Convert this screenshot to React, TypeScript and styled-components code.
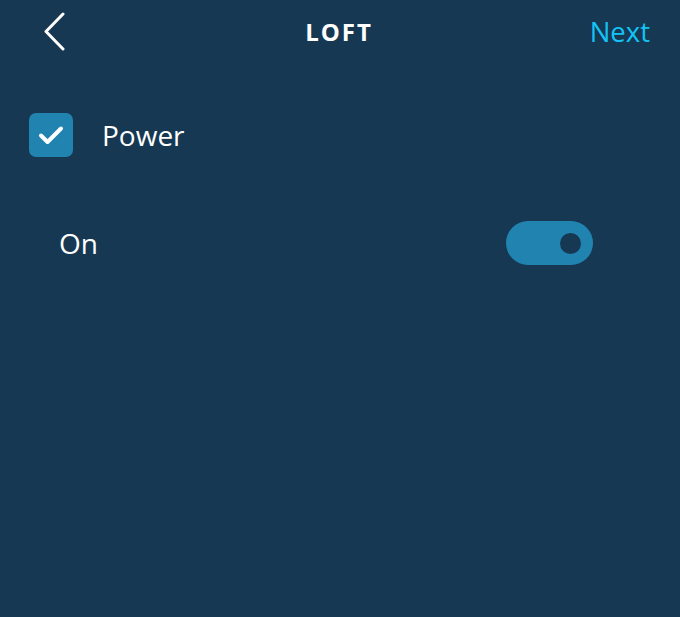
import React, { useState } from "react";
import styled, { createGlobalStyle } from "styled-components";

const GlobalStyle = createGlobalStyle`
  html, body {
    margin: 0;
    padding: 0;
    background: #163852;
  }
`;

const Page = styled.div`
  width: 680px;
  height: 617px;
  background: #163852;
  color: #ffffff;
  font-family: "Open Sans", "Liberation Sans", sans-serif;
  overflow: hidden;
`;

const Header = styled.div`
  height: 62px;
  display: grid;
  grid-template-columns: 1fr auto 1fr;
  align-items: center;
  padding: 0 30px;
`;

const BackBtn = styled.button`
  justify-self: start;
  background: none;
  border: none;
  padding: 0;
  margin-left: 12px;
  width: 26px;
  height: 40px;
  cursor: pointer;
  display: flex;
  align-items: center;
`;

const Title = styled.div`
  font-size: 24px;
  font-weight: 700;
  letter-spacing: 2px;
  margin-right: -2px;
  margin-left: -4px;
`;

const NextBtn = styled.div`
  justify-self: end;
  color: #14c3f5;
  font-size: 27.5px;
  cursor: pointer;
`;

const PowerRow = styled.label`
  display: flex;
  align-items: center;
  gap: 29px;
  margin: 51px 0 0 29px;
  font-size: 28px;
  font-weight: 500;
  cursor: pointer;
`;

const CheckBox = styled.div<{ checked: boolean }>`
  width: 44px;
  height: 44px;
  border-radius: 7px;
  background: ${(p) => (p.checked ? "#2183b0" : "transparent")};
  border: ${(p) => (p.checked ? "none" : "2px solid #2183b0")};
  box-sizing: border-box;
  display: flex;
  align-items: center;
  justify-content: center;
`;

const OnRow = styled.div`
  display: flex;
  align-items: center;
  justify-content: space-between;
  margin-top: 64px;
  padding: 0 87px 0 59px;
  font-size: 28px;
  font-weight: 500;
`;

const Toggle = styled.div<{ on: boolean }>`
  width: 87px;
  height: 44px;
  border-radius: 22px;
  background: ${(p) => (p.on ? "#2183b0" : "#56687a")};
  display: flex;
  align-items: center;
  justify-content: ${(p) => (p.on ? "flex-end" : "flex-start")};
  padding: 0 12px;
  box-sizing: border-box;
  cursor: pointer;
`;

const Knob = styled.div`
  width: 21px;
  height: 21px;
  border-radius: 50%;
  background: #163852;
`;

export default function App() {
  const [power, setPower] = useState(true);
  const [on, setOn] = useState(true);

  return (
    <>
      <GlobalStyle />
      <Page>
        <Header>
          <BackBtn aria-label="Back">
            <svg width="26" height="40" viewBox="0 0 26 40">
              <path
                d="M21 3 L4 20.5 L21 38"
                fill="none"
                stroke="#fff"
                strokeWidth="3"
                strokeLinecap="round"
                strokeLinejoin="round"
              />
            </svg>
          </BackBtn>
          <Title>LOFT</Title>
          <NextBtn>Next</NextBtn>
        </Header>

        <PowerRow onClick={() => setPower(!power)}>
          <CheckBox checked={power}>
            {power && (
              <svg width="26" height="20" viewBox="0 0 26 20">
                <path
                  d="M3 10.5 L9.5 17 L23 3.5"
                  fill="none"
                  stroke="#fff"
                  strokeWidth="4"
                  strokeLinecap="round"
                  strokeLinejoin="round"
                />
              </svg>
            )}
          </CheckBox>
          Power
        </PowerRow>

        <OnRow>
          <span>On</span>
          <Toggle on={on} onClick={() => setOn(!on)}>
            <Knob />
          </Toggle>
        </OnRow>
      </Page>
    </>
  );
}
